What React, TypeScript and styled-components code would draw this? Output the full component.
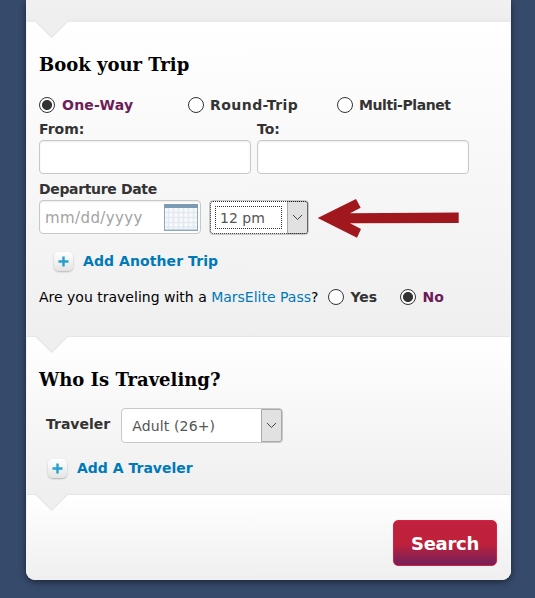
import React from "react";
import styled, { createGlobalStyle, css } from "styled-components";

const Global = createGlobalStyle`
  * { box-sizing: border-box; }
  body {
    margin: 0;
    background: #364a6c;
    font-family: Verdana, "DejaVu Sans", sans-serif;
    font-size: 14px;
    color: #333;
    overflow: hidden;
  }
`;

const Page = styled.div`
  height: 598px;
  padding: 0 24px 18px 26px;
  background: #364a6c;
`;

const Panel = styled.main`
  height: 580px;
  overflow: hidden;
  border-radius: 0 0 9px 9px;
  box-shadow: 0 2px 7px rgba(0, 0, 0, 0.5);
  background: #efefef;
`;

const Cap = styled.div`
  height: 22px;
  background: linear-gradient(#f1f1f1, #eeeeee 18px, #e9e9e9);
`;

const Section = styled.section<{ $h: number; $last?: boolean }>`
  display: flow-root;
  position: relative;
  height: ${(p) => p.$h}px;
  padding-left: 12px;
  border: solid #f3f3f3;
  border-width: 0 1px;
  background: linear-gradient(#ffffff, #efefef);
  ${(p) => !p.$last && css`box-shadow: inset 0 -2px 1px -1px #e4e4e4;`}
`;

const NotchSvg = styled.svg`
  position: absolute;
  left: 7px;
  top: -3px;
  display: block;
`;

const Notch = () => (
  <NotchSvg width="36" height="20">
    <path d="M2 2.5 L17.7 18 L33.4 2.5" fill="#efefef" stroke="#e6e6e6" strokeWidth="1.5" />
    <path d="M2 0 H33.4 V2 L17.7 17 L2 2Z" fill="#efefef" />
  </NotchSvg>
);

const Heading = styled.h2`
  margin: 30px 0 0;
  height: 26px;
  font: 700 18px/26px "DejaVu Serif", serif;
  letter-spacing: 0;
  color: #000;
  white-space: nowrap;
`;

const Text = styled.span<{ $ls?: number; $bold?: boolean; $color?: string; $size?: number }>`
  font-size: ${(p) => p.$size ?? 14}px;
  font-weight: ${(p) => (p.$bold ? 700 : 400)};
  letter-spacing: ${(p) => p.$ls ?? 0}px;
  color: ${(p) => p.$color ?? "#333"};
  white-space: nowrap;
`;

const Row = styled.div<{ $h: number; $mt?: number; $ml?: number; $gap?: number }>`
  display: flex;
  align-items: center;
  height: ${(p) => p.$h}px;
  margin-top: ${(p) => p.$mt ?? 0}px;
  margin-left: ${(p) => p.$ml ?? 0}px;
  gap: ${(p) => p.$gap ?? 0}px;
`;

const Option = styled.label<{ $w: number; $gap?: number }>`
  display: flex;
  align-items: center;
  flex: none;
  gap: ${(p) => p.$gap ?? 7}px;
  width: ${(p) => p.$w}px;
`;

const Dot = styled.span<{ $on?: boolean }>`
  flex: none;
  width: 16px;
  height: 16px;
  border: 1px solid #333;
  border-radius: 50%;
  background: ${(p) => (p.$on ? "radial-gradient(circle, #333 4.6px, #fff 5.4px)" : "#fff")};
`;

const Labels = styled.div`
  display: grid;
  grid-template-columns: 218px 1fr;
  align-items: center;
  height: 20px;
  margin-top: 6px;
`;

const Field = styled.div<{ $w: number }>`
  display: flex;
  align-items: center;
  flex: none;
  justify-content: space-between;
  width: ${(p) => p.$w}px;
  height: 34px;
  padding: 1px 2px 0 5px;
  border: 1px solid #c8c8c8;
  border-radius: 4px;
  background: #fff;
  box-shadow: inset 0 1px 2px rgba(0, 0, 0, 0.08);
`;

const Select = styled.div<{ $w: number; $focus?: boolean }>`
  display: flex;
  flex: none;
  width: ${(p) => p.$w}px;
  height: 35px;
  border: 1px solid #c8c8c8;
  border-radius: 4px;
  background: #fff;
  ${(p) => p.$focus && css`outline: 1px dotted #222; outline-offset: -2px;`}
`;

const Value = styled.div<{ $focus?: boolean }>`
  display: flex;
  align-items: center;
  flex: 1;
  margin: 5px;
  padding: 1px 0 0 4px;
  border: 1px ${(p) => (p.$focus ? "dotted #333" : "solid transparent")};
`;

const Drop = styled.div`
  display: flex;
  align-items: center;
  justify-content: center;
  width: 21px;
  border: 1px solid #a9a9a9;
  border-radius: 0 2px 2px 0;
  background: #e1e1e1;
`;

const Chevron = () => (
  <svg width="11" height="7">
    <path d="M1 1 L5.5 5.5 L10 1" fill="none" stroke="#444" strokeWidth="1" />
  </svg>
);

const Plus = styled.span`
  display: flex;
  align-items: center;
  justify-content: center;
  flex: none;
  width: 19px;
  height: 19px;
  border-radius: 5px;
  background: linear-gradient(#fff, #e4e4e4);
  box-shadow: 0 1px 2px rgba(0, 0, 0, 0.26);
`;

const PlusIcon = () => (
  <Plus>
    <svg width="11" height="11">
      <path d="M5.5 0.5V10.5M0.5 5.5H10.5" stroke="#27a0cf" strokeWidth="2.4" />
    </svg>
  </Plus>
);

const Calendar = () => (
  <svg width="34" height="27">
    <rect width="34" height="27" fill="#8ba8be" />
    <rect x="1" y="4" width="32" height="21.5" fill="#f8fafb" />
    <path
      d="M4.5 4V25M9.5 4V25M14.5 4V25M19.5 4V25M24.5 4V25M29.5 4V25M1 8.5H33M1 13.5H33M1 18.5H33M1 23H33"
      stroke="#e3eaf0"
      strokeWidth="1.6"
    />
    <rect width="34" height="4" fill="#7b9bb5" />
  </svg>
);

const Arrow = styled.svg`
  margin-left: 8px;
  flex: none;
  overflow: visible;
`;

const Search = styled.button`
  display: block;
  width: 104px;
  height: 46px;
  margin: 25px 0 0 354px;
  padding: 0;
  border: 1px solid #d9203f;
  border-radius: 5px;
  background: linear-gradient(#c0213c 0%, #bf213b 52%, #72205b 100%);
  font: 700 18px Verdana, "DejaVu Sans", sans-serif;
  letter-spacing: -0.3px;
  color: #fff;
`;

const LINK = "#0079b8";
const PLUM = "#6e1b58";

export default function App() {
  return (
    <Page>
      <Global />
      <Panel>
        <Cap />
        <Section $h={315}>
          <Notch />
          <Heading>Book your Trip</Heading>
          <Row $h={16} $mt={19}>
            <Option $w={149}><Dot $on /><Text $bold $ls={0.25} $color={PLUM}>One-Way</Text></Option>
            <Option $w={149} $gap={6}><Dot /><Text $bold $ls={0.45}>Round-Trip</Text></Option>
            <Option $w={120} $gap={6}><Dot /><Text $bold $ls={-0.42}>Multi-Planet</Text></Option>
          </Row>
          <Labels>
            <Text $bold>From:</Text>
            <Text $bold>To:</Text>
          </Labels>
          <Row $h={34} $mt={1} $gap={6}>
            <Field $w={212} />
            <Field $w={212} />
          </Row>
          <Row $h={20} $mt={5}><Text $bold $ls={-0.35}>Departure Date</Text></Row>
          <Row $h={40} $mt={-2}>
            <Field $w={162}>
              <Text $size={15} $ls={0.4} $color="#a3a3a3">mm/dd/yyyy</Text>
              <Calendar />
            </Field>
            <Row $h={40} $ml={8}>
              <Select $w={100} $focus>
                <Value $focus><Text $color="#555">12 pm</Text></Value>
                <Drop><Chevron /></Drop>
              </Select>
              <Arrow width="143" height="40">
                <path d="M0.7 21 L39 2 L43.7 10.7 L33 16.3 L141.7 15.6 V26 L33 26.3 L44 32 L40 40.7Z" fill="#a1171e" />
              </Arrow>
            </Row>
          </Row>
          <Row $h={20} $mt={14} $ml={15} $gap={10}>
            <PlusIcon /><Text $bold $ls={0.08} $color={LINK}>Add Another Trip</Text>
          </Row>
          <Row $h={18} $mt={17}>
            <Text $color="#000">Are you traveling with a <Text $color={LINK}>MarsElite Pass</Text>?</Text>
            <Row $h={18} $ml={10}>
              <Option $w={72} $gap={6}><Dot /><Text $bold>Yes</Text></Option>
              <Option $w={60} $gap={6}><Dot $on /><Text $bold $color={PLUM}>No</Text></Option>
            </Row>
          </Row>
        </Section>
        <Section $h={158}>
          <Notch />
          <Heading>Who Is Traveling?</Heading>
          <Row $h={31} $mt={15} $ml={7} $gap={11}>
            <Text $bold>Traveler</Text>
            <Row $h={35} $mt={4}>
              <Select $w={162}>
                <Value><Text $ls={0.15} $color="#555">Adult (26+)</Text></Value>
                <Drop><Chevron /></Drop>
              </Select>
            </Row>
          </Row>
          <Row $h={20} $mt={19} $ml={9} $gap={10}>
            <PlusIcon /><Text $bold $color={LINK}>Add A Traveler</Text>
          </Row>
        </Section>
        <Section $h={85} $last>
          <Notch />
          <Search>Search</Search>
        </Section>
      </Panel>
    </Page>
  );
}
